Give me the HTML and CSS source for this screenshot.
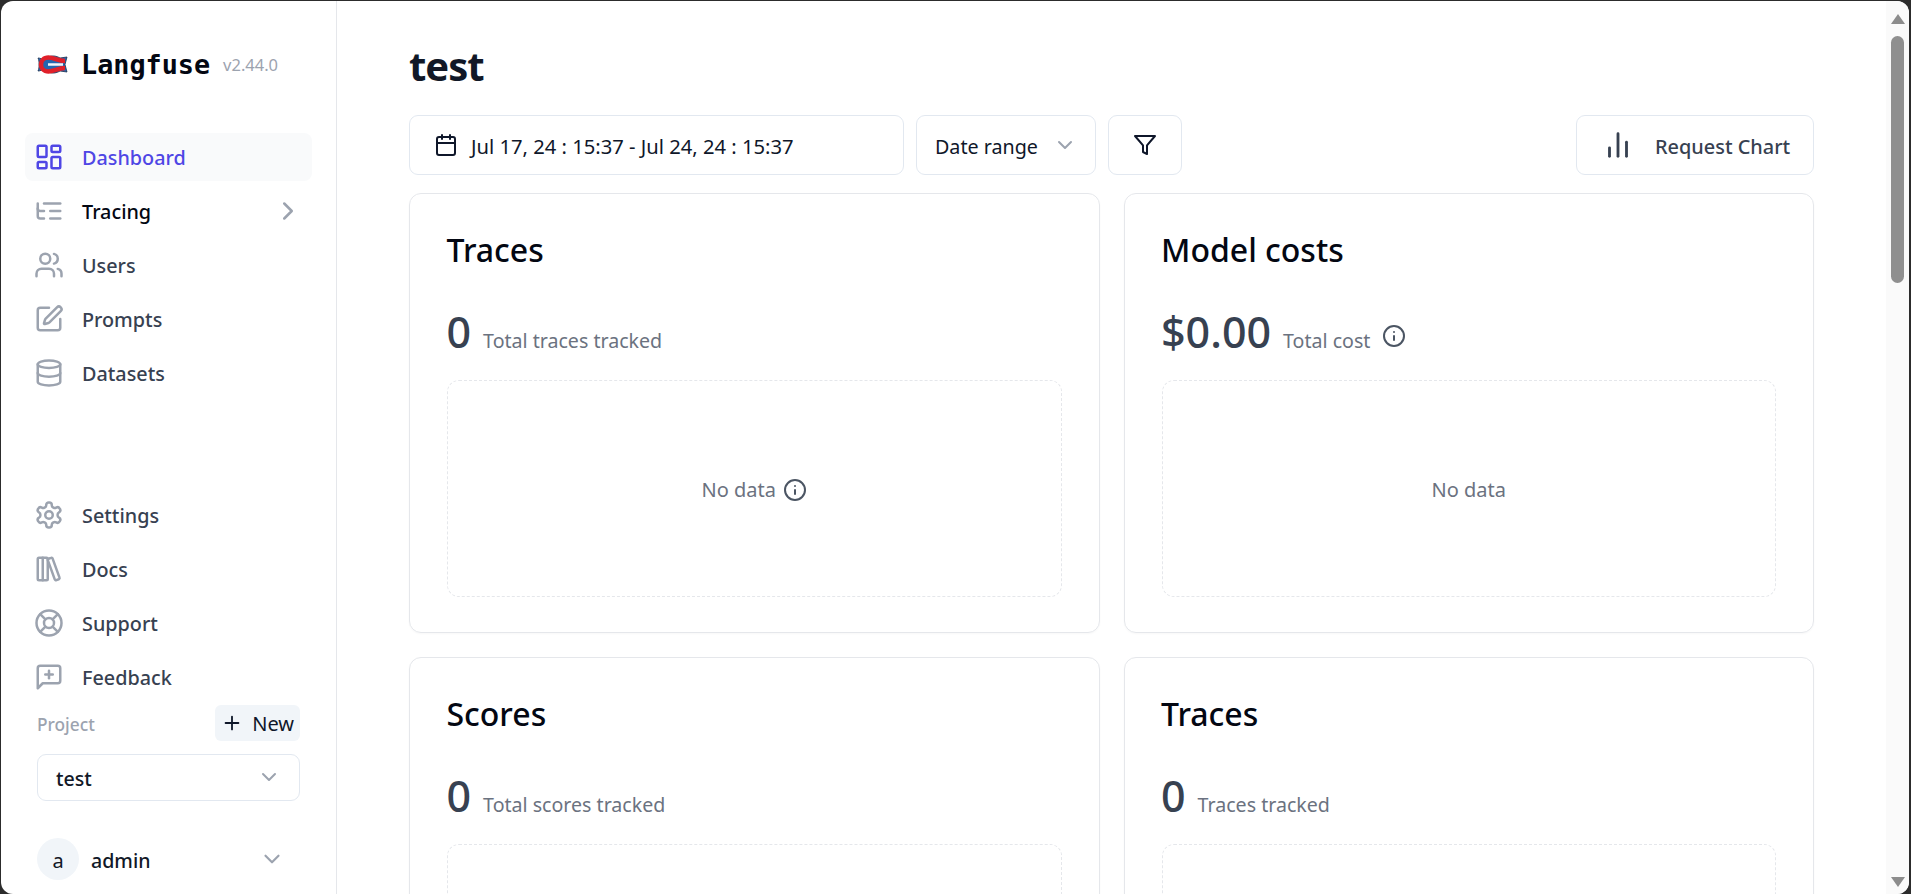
FILE: index.html
```html
<!DOCTYPE html>
<html lang="en">

<head>
    <meta charset="UTF-8">
    <meta name="viewport" content="width=device-width, initial-scale=1.0">
    <title>Langfuse</title>
    <link rel="stylesheet" href="styles.css">
</head>

<body>
    <div class="window">

        <!-- Sidebar -->
        <aside class="sidebar">
            <div class="brand">
                <svg class="brand-logo" viewBox="0 0 31 21">
                    <path d="M1 4c2 0 4 1 6 2 5-5 11-5 16-2l7-1-2 7.500 2 7.500-7-1c-5 3-11 3-16-2-2 1-4 2-6 2 1-2 1-4 1-6.500s0-4.500-1-6.500z" fill="#2466b0" stroke="#1b2f4d" stroke-width="0.8" />
                    <path d="M28 7C21 7 17 3.500 11.500 3.500 6.500 3.500 4 7 4 10.500s2.500 7 7.500 7C17 17.500 21 14 28 14" fill="none" stroke="#e0202a" stroke-width="4.500" />
                    <path d="M11 10.500h15" stroke="#f4f6fa" stroke-width="2.500" />
                </svg>
                <span class="brand-name">Langfuse</span>
                <span class="brand-version">v2.44.0</span>
            </div>

            <nav class="nav-list">
                <a class="nav-item active">
                    <svg class="icon nav-icon" viewBox="0 0 24 24"><rect x="3" y="3" width="7" height="9" rx="1" /><rect x="14" y="3" width="7" height="5" rx="1" /><rect x="14" y="12" width="7" height="9" rx="1" /><rect x="3" y="16" width="7" height="5" rx="1" /></svg>
                    Dashboard
                </a>
                <a class="nav-item strong">
                    <svg class="icon nav-icon" viewBox="0 0 24 24"><path d="M21 12h-8" /><path d="M21 6H8" /><path d="M21 18h-8" /><path d="M3 6v4c0 1.1.9 2 2 2h3" /><path d="M3 10v6c0 1.1.9 2 2 2h3" /></svg>
                    Tracing
                    <svg class="icon nav-arrow" viewBox="0 0 24 24"><path d="m9 18 6-6-6-6" /></svg>
                </a>
                <a class="nav-item">
                    <svg class="icon nav-icon" viewBox="0 0 24 24"><path d="M16 21v-2a4 4 0 0 0-4-4H6a4 4 0 0 0-4 4v2" /><circle cx="9" cy="7" r="4" /><path d="M22 21v-2a4 4 0 0 0-3-3.87" /><path d="M16 3.13a4 4 0 0 1 0 7.75" /></svg>
                    Users
                </a>
                <a class="nav-item">
                    <svg class="icon nav-icon" viewBox="0 0 24 24"><path d="M12 3H5a2 2 0 0 0-2 2v14a2 2 0 0 0 2 2h14a2 2 0 0 0 2-2v-7" /><path d="M18.375 2.625a1 1 0 0 1 3 3l-9.013 9.014a2 2 0 0 1-.853.505l-2.873.84a.5.5 0 0 1-.62-.62l.84-2.873a2 2 0 0 1 .506-.852z" /></svg>
                    Prompts
                </a>
                <a class="nav-item">
                    <svg class="icon nav-icon" viewBox="0 0 24 24"><ellipse cx="12" cy="5" rx="9" ry="3" /><path d="M3 5V19A9 3 0 0 0 21 19V5" /><path d="M3 12A9 3 0 0 0 21 12" /></svg>
                    Datasets
                </a>
            </nav>

            <nav class="nav-list nav-bottom">
                <a class="nav-item">
                    <svg class="icon nav-icon" viewBox="0 0 24 24"><path d="M12.220 2h-.44a2 2 0 0 0-2 2v.18a2 2 0 0 1-1 1.730l-.43.25a2 2 0 0 1-2 0l-.15-.08a2 2 0 0 0-2.730.73l-.22.38a2 2 0 0 0 .73 2.730l.15.1a2 2 0 0 1 1 1.720v.51a2 2 0 0 1-1 1.740l-.15.09a2 2 0 0 0-.73 2.730l.22.38a2 2 0 0 0 2.730.73l.15-.08a2 2 0 0 1 2 0l.43.25a2 2 0 0 1 1 1.730V20a2 2 0 0 0 2 2h.44a2 2 0 0 0 2-2v-.18a2 2 0 0 1 1-1.730l.43-.25a2 2 0 0 1 2 0l.15.08a2 2 0 0 0 2.730-.73l.22-.39a2 2 0 0 0-.73-2.730l-.15-.08a2 2 0 0 1-1-1.740v-.5a2 2 0 0 1 1-1.740l.15-.09a2 2 0 0 0 .73-2.730l-.22-.38a2 2 0 0 0-2.730-.73l-.15.08a2 2 0 0 1-2 0l-.43-.25a2 2 0 0 1-1-1.730V4a2 2 0 0 0-2-2z" /><circle cx="12" cy="12" r="3" /></svg>
                    Settings
                </a>
                <a class="nav-item">
                    <svg class="icon nav-icon" viewBox="0 0 24 24"><rect x="3" y="3" width="8" height="18" rx="1" /><path d="M7 3v18" /><path d="M20.4 18.9c.2.5-.1 1.1-.6 1.3l-1.9.7c-.5.2-1.1-.1-1.3-.6L11.1 5.1c-.2-.5.1-1.1.6-1.3l1.9-.7c.5-.2 1.1.1 1.3.6Z" /></svg>
                    Docs
                </a>
                <a class="nav-item">
                    <svg class="icon nav-icon" viewBox="0 0 24 24"><circle cx="12" cy="12" r="10" /><path d="m4.93 4.93 4.24 4.24" /><path d="m14.83 9.17 4.24-4.24" /><path d="m14.83 14.83 4.24 4.24" /><path d="m9.17 14.83-4.24 4.24" /><circle cx="12" cy="12" r="4" /></svg>
                    Support
                </a>
                <a class="nav-item">
                    <svg class="icon nav-icon" viewBox="0 0 24 24"><path d="M21 15a2 2 0 0 1-2 2H7l-4 4V5a2 2 0 0 1 2-2h14a2 2 0 0 1 2 2z" /><path d="M12 7v6" /><path d="M9 10h6" /></svg>
                    Feedback
                </a>
            </nav>

            <!-- Project picker -->
            <div class="project">
                <div class="project-head">
                    <span class="project-label">Project</span>
                    <button class="new-button">
                        <svg class="icon plus-icon" viewBox="0 0 24 24"><path d="M5 12h14" /><path d="M12 5v14" /></svg>
                        New
                    </button>
                </div>
                <div class="project-select">
                    test
                    <svg class="icon chevron" viewBox="0 0 24 24"><path d="m6 9 6 6 6-6" /></svg>
                </div>
            </div>

            <div class="user">
                <span class="avatar">a</span>
                <span class="user-name">admin</span>
                <svg class="icon chevron user-chevron" viewBox="0 0 24 24"><path d="m6 9 6 6 6-6" /></svg>
            </div>
        </aside>

        <!-- Main content -->
        <main class="main">
            <h1 class="page-title">test</h1>

            <div class="toolbar">
                <button class="tool-button date-button">
                    <svg class="icon tool-icon" viewBox="0 0 24 24"><path d="M8 2v4" /><path d="M16 2v4" /><rect x="3" y="4" width="18" height="18" rx="2" /><path d="M3 10h18" /></svg>
                    Jul 17, 24 : 15:37 - Jul 24, 24 : 15:37
                </button>
                <button class="tool-button range-button">
                    Date range
                    <svg class="icon chevron" viewBox="0 0 24 24"><path d="m6 9 6 6 6-6" /></svg>
                </button>
                <button class="tool-button filter-button">
                    <svg class="icon tool-icon" viewBox="0 0 24 24"><polygon points="22 3 2 3 10 12.46 10 19 14 21 14 12.46 22 3" /></svg>
                </button>
                <button class="tool-button chart-button">
                    <svg class="icon chart-icon" viewBox="0 0 24 24"><path d="M18 20V10" /><path d="M12 20V4" /><path d="M6 20v-6" /></svg>
                    Request Chart
                </button>
            </div>

            <div class="card-grid">
                <section class="card">
                    <h2 class="card-title">Traces</h2>
                    <div class="metric">
                        <span class="metric-value">0</span>
                        <span class="metric-label">Total traces tracked</span>
                    </div>
                    <div class="no-data">
                        No data
                        <svg class="icon info-icon" viewBox="0 0 24 24"><circle cx="12" cy="12" r="10" /><path d="M12 16v-4" /><path d="M12 8h.01" /></svg>
                    </div>
                </section>

                <section class="card">
                    <h2 class="card-title">Model costs</h2>
                    <div class="metric">
                        <span class="metric-value">$0.00</span>
                        <span class="metric-label">Total cost</span>
                        <svg class="icon info-icon metric-info" viewBox="0 0 24 24"><circle cx="12" cy="12" r="10" /><path d="M12 16v-4" /><path d="M12 8h.01" /></svg>
                    </div>
                    <div class="no-data">No data</div>
                </section>

                <section class="card">
                    <h2 class="card-title">Scores</h2>
                    <div class="metric">
                        <span class="metric-value">0</span>
                        <span class="metric-label">Total scores tracked</span>
                    </div>
                    <div class="no-data"></div>
                </section>

                <section class="card">
                    <h2 class="card-title">Traces</h2>
                    <div class="metric">
                        <span class="metric-value">0</span>
                        <span class="metric-label">Traces tracked</span>
                    </div>
                    <div class="no-data"></div>
                </section>
            </div>
        </main>

        <!-- Scrollbar -->
        <div class="scroll-rail">
            <span class="arrow-up"></span>
            <span class="scroll-thumb"></span>
            <span class="arrow-down"></span>
        </div>
    </div>
</body>
</html>
```

FILE: styles.css
```css
* {
    box-sizing: border-box;
}

html, body {
    height: 100%;
}

body {
    margin: 0;
    padding: 1px 2px 0 1px;
    overflow: hidden;
    background-color: #2c2c2c;
    font-family: "Noto Sans", Arial, sans-serif;
    color: #111827;
}

.window {
    display: flex;
    height: 100%;
    background-color: white;
    border-radius: 12px;
    overflow: hidden;
}

.icon {
    fill: none;
    stroke: currentColor;
    stroke-width: 2;
    stroke-linecap: round;
    stroke-linejoin: round;
    flex-shrink: 0;
}

/* Sidebar */
.sidebar {
    display: flex;
    flex-direction: column;
    flex-shrink: 0;
    width: 336px;
    height: 100%;
    padding: 0 24px 14px;
    border-right: 1px solid #e5e7eb;
}

.brand {
    display: flex;
    align-items: center;
    height: 132px;
    padding: 0 0 6px 12px;
}

.brand-logo {
    width: 31px;
    height: 21px;
    margin-right: 13px;
}

.brand-name {
    font-family: "DejaVu Sans Mono", monospace;
    font-size: 26.8px;
    font-weight: bold;
    color: #030712;
}

.brand-version {
    margin-left: 13px;
    font-size: 16.5px;
    color: #9ca3af;
}

.nav-list {
    display: flex;
    flex-direction: column;
    gap: 6px;
}

.nav-bottom {
    margin-top: auto;
}

.nav-item {
    display: flex;
    align-items: center;
    height: 48px;
    padding: 1px 9px 0;
    border-radius: 8px;
    font-size: 19.8px;
    font-weight: 500;
    color: #374151;
}

.nav-item.active {
    background-color: #f9fafb;
    color: #4f46e5;
}

.nav-item.strong {
    color: #030712;
}

.nav-icon {
    width: 30px;
    height: 30px;
    margin-top: -1px;
    margin-right: 18px;
    color: #9ca3af;
}

.nav-item.active .nav-icon {
    color: #4f46e5;
}

.nav-arrow {
    width: 30px;
    height: 30px;
    margin-top: -1px;
    margin-left: auto;
    color: #9ca3af;
}

.project {
    padding: 4px 12px 0;
}

.project-head {
    display: flex;
    align-items: center;
    justify-content: space-between;
    height: 36px;
}

.project-label {
    padding-top: 2px;
    font-size: 17.3px;
    font-weight: 500;
    color: #9ca3af;
}

.new-button {
    display: flex;
    align-items: center;
    gap: 9px;
    height: 36px;
    padding: 0 6px;
    border: none;
    border-radius: 6px;
    background-color: #f1f5f9;
    font-family: inherit;
    font-size: 20px;
    color: #0f172a;
}

.plus-icon {
    width: 22px;
    height: 22px;
}

.project-select {
    display: flex;
    align-items: center;
    justify-content: space-between;
    height: 47px;
    margin-top: 13px;
    padding: 2px 18px 0;
    border: 1px solid #e2e8f0;
    border-radius: 9px;
    font-size: 19.6px;
    font-weight: 500;
}

.chevron {
    width: 24px;
    height: 24px;
    color: #9ca3af;
}

.project-select .chevron {
    margin-top: -4px;
}

.user {
    display: flex;
    align-items: center;
    margin-top: 37px;
    padding-left: 12px;
    padding-right: 27px;
}

.avatar {
    display: flex;
    align-items: center;
    justify-content: center;
    width: 42px;
    height: 42px;
    margin-right: 12px;
    padding-top: 2px;
    border-radius: 50%;
    background-color: #f1f5f9;
    font-size: 20px;
}

.user-name {
    flex-grow: 1;
    padding-top: 2px;
    font-size: 19.6px;
    font-weight: 500;
}

.user-chevron {
    width: 26px;
    height: 26px;
}

/* Main content */
.main {
    flex: 1;
    min-width: 0;
    padding: 0 72px;
    overflow: hidden;
}

.page-title {
    height: 114px;
    margin: 0;
    padding-top: 40px;
    font-size: 40px;
    line-height: 50px;
    font-weight: 700;
    letter-spacing: -1px;
    color: #111827;
}

.toolbar {
    display: flex;
    gap: 12px;
    height: 60px;
    margin-bottom: 18px;
}

.tool-button {
    display: flex;
    align-items: center;
    padding: 2px 18px 0;
    border: 1px solid #e2e8f0;
    border-radius: 9px;
    background-color: white;
    font-family: inherit;
    font-size: 19.7px;
    color: #0f172a;
    white-space: nowrap;
}

.tool-button .icon {
    margin-top: -2px;
}

.date-button {
    width: 495px;
    padding: 2px 24px 0;
    font-size: 20.2px;
}

.tool-icon {
    width: 24px;
    height: 24px;
    margin-right: 13px;
}

.range-button {
    width: 180px;
    justify-content: space-between;
}

.filter-button {
    width: 74px;
    justify-content: center;
}

.filter-button .tool-icon {
    margin-right: 0;
}

.chart-button {
    margin-left: auto;
    width: 238px;
    padding: 2px 0 0 24px;
    font-size: 19.9px;
    font-weight: 500;
    color: #374151;
}

.chart-icon {
    width: 34px;
    height: 34px;
    margin-right: 20px;
}

.card-grid {
    display: grid;
    grid-template-columns: 1fr 1fr;
    gap: 24px;
}

.card {
    height: 440px;
    padding: 35px 37px 0;
    border: 1px solid #e5e7eb;
    border-radius: 12px;
    box-shadow: 0 1px 2px rgba(0, 0, 0, 0.03);
}

.card-title {
    margin: 0 0 0 -0.5px;
    font-size: 32px;
    line-height: 42px;
    font-weight: 500;
    color: #030712;
}

.metric {
    display: flex;
    align-items: baseline;
    height: 64px;
    margin-top: 35px;
    margin-left: -0.5px;
}

.metric-value {
    font-size: 43px;
    line-height: 52px;
    font-weight: 500;
    color: #374151;
}

.metric-label {
    margin-left: 12px;
    font-size: 19.6px;
    color: #6b7280;
}

.metric-info {
    align-self: center;
    margin-top: -4px;
    margin-left: 12px;
}

.no-data {
    display: flex;
    align-items: center;
    justify-content: center;
    gap: 7px;
    height: 217px;
    margin-top: 10px;
    padding-top: 2px;
    border: 1px dashed #e5e7eb;
    border-radius: 12px;
    font-size: 20px;
    color: #6b7280;
}

.info-icon {
    width: 24px;
    height: 24px;
    color: #4b5563;
}

/* Scrollbar */
.scroll-rail {
    display: flex;
    flex-direction: column;
    align-items: center;
    flex-shrink: 0;
    width: 23px;
    padding: 13px 5px 7px 5px;
    background-color: #fafafa;
}

.arrow-up, .arrow-down {
    width: 0;
    height: 0;
    border-left: 7.5px solid transparent;
    border-right: 7.5px solid transparent;
}

.arrow-up {
    border-bottom: 10px solid #8c8c8c;
}

.arrow-down {
    margin-top: auto;
    border-top: 10px solid #8c8c8c;
}

.scroll-thumb {
    width: 13px;
    height: 247px;
    margin-top: 12px;
    border-radius: 7px;
    background-color: #8f8f8f;
}
```
